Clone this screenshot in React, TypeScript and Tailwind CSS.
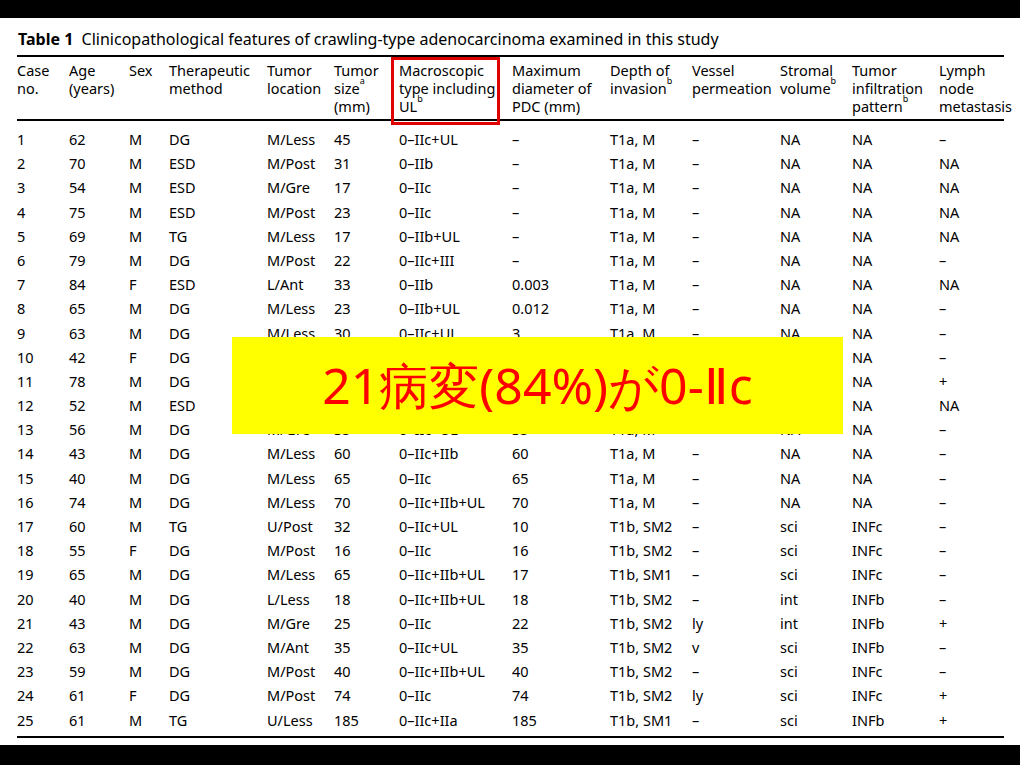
const cols = "grid grid-cols-[52px_60px_40px_98px_67px_65px_113px_98px_82px_88px_72px_87px_66px]";

const rows: string[][] = [
  ["1","62","M","DG","M/Less","45","0–IIc+UL","–","T1a, M","–","NA","NA","–"],
  ["2","70","M","ESD","M/Post","31","0–IIb","–","T1a, M","–","NA","NA","NA"],
  ["3","54","M","ESD","M/Gre","17","0–IIc","–","T1a, M","–","NA","NA","NA"],
  ["4","75","M","ESD","M/Post","23","0–IIc","–","T1a, M","–","NA","NA","NA"],
  ["5","69","M","TG","M/Less","17","0–IIb+UL","–","T1a, M","–","NA","NA","NA"],
  ["6","79","M","DG","M/Post","22","0–IIc+III","–","T1a, M","–","NA","NA","–"],
  ["7","84","F","ESD","L/Ant","33","0–IIb","0.003","T1a, M","–","NA","NA","NA"],
  ["8","65","M","DG","M/Less","23","0–IIb+UL","0.012","T1a, M","–","NA","NA","–"],
  ["9","63","M","DG","M/Less","30","0–IIc+UL","3","T1a, M","–","NA","NA","–"],
  ["10","42","F","DG","M/Less","40","0–IIc","40","T1a, M","–","NA","NA","–"],
  ["11","78","M","DG","M/Post","45","0–IIc+UL","45","T1a, M","–","NA","NA","+"],
  ["12","52","M","ESD","M/Less","25","0–IIc","25","T1a, M","–","NA","NA","NA"],
  ["13","56","M","DG","M/Gre","35","0–IIc+UL","35","T1a, M","–","NA","NA","–"],
  ["14","43","M","DG","M/Less","60","0–IIc+IIb","60","T1a, M","–","NA","NA","–"],
  ["15","40","M","DG","M/Less","65","0–IIc","65","T1a, M","–","NA","NA","–"],
  ["16","74","M","DG","M/Less","70","0–IIc+IIb+UL","70","T1a, M","–","NA","NA","–"],
  ["17","60","M","TG","U/Post","32","0–IIc+UL","10","T1b, SM2","–","sci","INFc","–"],
  ["18","55","F","DG","M/Post","16","0–IIc","16","T1b, SM2","–","sci","INFc","–"],
  ["19","65","M","DG","M/Less","65","0–IIc+IIb+UL","17","T1b, SM1","–","sci","INFc","–"],
  ["20","40","M","DG","L/Less","18","0–IIc+IIb+UL","18","T1b, SM2","–","int","INFb","–"],
  ["21","43","M","DG","M/Gre","25","0–IIc","22","T1b, SM2","ly","int","INFb","+"],
  ["22","63","M","DG","M/Ant","35","0–IIc+UL","35","T1b, SM2","v","sci","INFb","–"],
  ["23","59","M","DG","M/Post","40","0–IIc+IIb+UL","40","T1b, SM2","–","sci","INFc","–"],
  ["24","61","F","DG","M/Post","74","0–IIc","74","T1b, SM2","ly","sci","INFc","+"],
  ["25","61","M","TG","U/Less","185","0–IIc+IIa","185","T1b, SM1","–","sci","INFb","+"],
];

function Sup({ c }: { c: string }) {
  return <sup className="text-[9px] align-super">{c}</sup>;
}

export default function App() {
  return (
    <div className="w-[1020px] h-[765px] bg-black flex flex-col [font-family:'Liberation_Serif','Times_New_Roman',serif] text-[14.5px] text-black">
      <div className="h-[18px]" />
      <div className="relative flex-1 bg-white px-[17px] pt-[11px]">
        <div className="text-[16px] leading-5 pl-px">
          <span className="font-bold">Table 1</span>&nbsp; Clinicopathological features of crawling-type adenocarcinoma examined in this study
        </div>
        <div className="w-[987px] mt-[6px] border-t-2 border-black" />
        <div className={`${cols} leading-[18px] pt-[4px] pb-[4px] w-[987px] border-b-2 border-black`}>
          <div>Case<br />no.</div>
          <div>Age<br />(years)</div>
          <div>Sex</div>
          <div>Therapeutic<br />method</div>
          <div>Tumor<br />location</div>
          <div>Tumor<br />size<Sup c="a" /><br />(mm)</div>
          <div>Macroscopic<br />type including<br />UL<Sup c="b" /></div>
          <div>Maximum<br />diameter of<br />PDC (mm)</div>
          <div>Depth of<br />invasion<Sup c="b" /></div>
          <div>Vessel<br />permeation</div>
          <div>Stromal<br />volume<Sup c="b" /></div>
          <div>Tumor<br />infiltration<br />pattern<Sup c="b" /></div>
          <div>Lymph<br />node<br />metastasis</div>
        </div>
        <div className="pt-[6px] pb-[4px] w-[987px] border-b-2 border-black">
          {rows.map((r) => (
            <div key={r[0]} className={`${cols} h-[24.2px] leading-[24px]`}>
              {r.map((c, i) => <div key={i} className="whitespace-nowrap">{c}</div>)}
            </div>
          ))}
        </div>
        <div className="absolute left-[391px] top-[39px] w-[109px] h-[68px] border-[3px] border-[#e00000]" />
        <div className="absolute left-[232px] top-[319px] w-[611px] h-[97px] bg-[#ffff00] flex items-center justify-center text-[#ff0000] text-[50px] [font-family:'Noto_Sans_CJK_JP',sans-serif]">
          21病変(84%)が0-Ⅱc
        </div>
      </div>
      <div className="h-[20px]" />
    </div>
  );
}
